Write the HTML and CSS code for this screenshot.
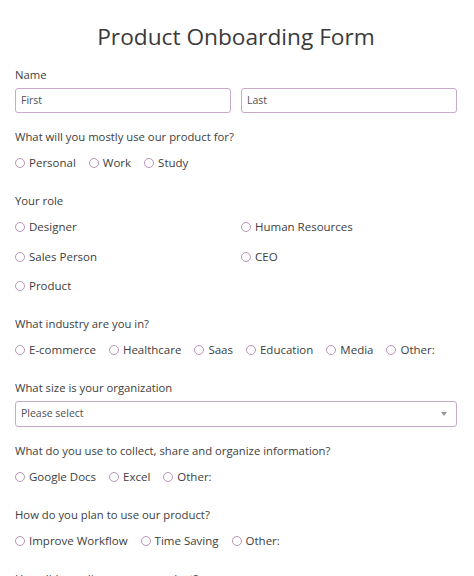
FILE: index.html
```html
<!DOCTYPE html>
<html lang="en">
<head>
<meta charset="utf-8">
<title>Product Onboarding Form</title>
<link rel="stylesheet" href="styles.css">
</head>
<body>
<form class="form">
  <h1 class="title">Product Onboarding Form</h1>

  <div class="field">
    <div class="label">Name</div>
    <div class="name-row">
      <div class="input">First</div>
      <div class="input">Last</div>
    </div>
  </div>

  <div class="field">
    <div class="label">What will you mostly use our product for?</div>
    <div class="radios">
      <span class="opt"><span class="dot"></span>Personal</span>
      <span class="opt"><span class="dot"></span>Work</span>
      <span class="opt"><span class="dot"></span>Study</span>
    </div>
  </div>

  <div class="field">
    <div class="label">Your role</div>
    <div class="radios grid">
      <span class="opt"><span class="dot"></span>Designer</span>
      <span class="opt"><span class="dot"></span>Human Resources</span>
      <span class="opt"><span class="dot"></span>Sales Person</span>
      <span class="opt"><span class="dot"></span>CEO</span>
      <span class="opt"><span class="dot"></span>Product</span>
    </div>
  </div>

  <div class="field">
    <div class="label">What industry are you in?</div>
    <div class="radios">
      <span class="opt"><span class="dot"></span>E-commerce</span>
      <span class="opt"><span class="dot"></span>Healthcare</span>
      <span class="opt"><span class="dot"></span>Saas</span>
      <span class="opt"><span class="dot"></span>Education</span>
      <span class="opt"><span class="dot"></span>Media</span>
      <span class="opt"><span class="dot"></span>Other:</span>
    </div>
  </div>

  <div class="field field-input">
    <div class="label">What size is your organization</div>
    <div class="input select">Please select<span class="caret"></span></div>
  </div>

  <div class="field">
    <div class="label">What do you use to collect, share and organize information?</div>
    <div class="radios">
      <span class="opt"><span class="dot"></span>Google Docs</span>
      <span class="opt"><span class="dot"></span>Excel</span>
      <span class="opt"><span class="dot"></span>Other:</span>
    </div>
  </div>

  <div class="field">
    <div class="label">How do you plan to use our product?</div>
    <div class="radios">
      <span class="opt"><span class="dot"></span>Improve Workflow</span>
      <span class="opt"><span class="dot"></span>Time Saving</span>
      <span class="opt"><span class="dot"></span>Other:</span>
    </div>
  </div>

  <div class="field">
    <div class="label">How did you discover our product?</div>
  </div>
</form>
</body>
</html>
```

FILE: styles.css
```css
html, body {
  margin: 0;
  padding: 0;
  background: #ffffff;
}

body {
  font-family: "Open Sans", "DejaVu Sans", sans-serif;
  color: #404040;
}

.form {
  width: 442px;
  margin: 0 0 0 15px;
  padding-top: 21px;
}

.title {
  margin: 0 0 13px 0;
  font-size: 22.7px;
  line-height: 32px;
  font-weight: 400;
  text-align: center;
  color: #3a3a3a;
}

.field {
  margin-bottom: 15px;
}

.label {
  font-size: 11.3px;
  line-height: 18px;
  margin-bottom: 4px;
}

.name-row {
  display: grid;
  grid-template-columns: 1fr 1fr;
  column-gap: 10px;
}

.input {
  box-sizing: border-box;
  height: 25px;
  border: 1.5px solid #c8aac8;
  border-radius: 3px;
  padding: 0 5px;
  font-size: 10.5px;
  line-height: 22px;
  color: #505050;
}

.select {
  position: relative;
  height: 26px;
  line-height: 23px;
}

.caret {
  position: absolute;
  right: 9px;
  top: 10px;
  width: 0;
  height: 0;
  border-left: 3.5px solid transparent;
  border-right: 3.5px solid transparent;
  border-top: 4px solid #9a9a9a;
}

.radios {
  display: flex;
  flex-wrap: wrap;
  column-gap: 13px;
  padding: 4px 0 5px 0;
}

.radios.grid {
  display: grid;
  grid-template-columns: 1fr 1fr;
  column-gap: 10px;
  row-gap: 11.5px;
}

.opt {
  display: inline-flex;
  align-items: center;
  gap: 4px;
  font-size: 11.5px;
  line-height: 18px;
  color: #404040;
}

.dot {
  box-sizing: border-box;
  width: 10px;
  height: 10px;
  border: 1.5px solid #b895b8;
  border-radius: 50%;
  flex: none;
}
```
